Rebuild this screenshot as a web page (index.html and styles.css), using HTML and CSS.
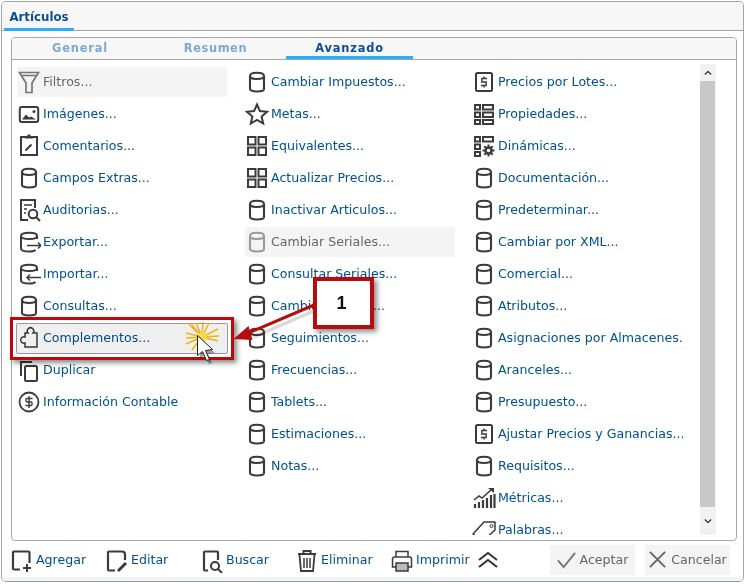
FILE: index.html
```html
<!DOCTYPE html>
<html lang="es">
<head>
<meta charset="utf-8">
<title>Artículos</title>
<link rel="stylesheet" href="styles.css">
</head>
<body>
<svg class="defs" width="0" height="0">
  <defs>
    <symbol id="cyl" viewBox="0 0 24 24"><path d="M5 6C5 3.800 8 2.800 12 2.800S19 3.800 19 6v13c0 1.600-3 2.500-7 2.500S5 20.600 5 19zM5 6c0 2 3 3 7 3s7-1 7-3" fill="none" stroke="currentColor" stroke-width="2.100"/></symbol>
    <symbol id="grid" viewBox="0 0 24 24"><path d="M3 3h7.500v7.500H3zM13.500 3H21v7.500h-7.500zM3 13.500h7.500V21H3zM13.500 13.500H21V21h-7.500z" fill="none" stroke="currentColor" stroke-width="2"/></symbol>
    <symbol id="dollar" viewBox="0 0 24 24"><rect x="4" y="3" width="16" height="18" rx="1.500" fill="none" stroke="currentColor" stroke-width="2"/><path d="M15 8.500H9.800v3.500h4.400v3.500H9M12 6.500v2M12 15.500v2" fill="none" stroke="currentColor" stroke-width="1.400"/></symbol>
  </defs>
</svg>
<main class="window">
  <header class="head"><span class="head-tab">Artículos</span></header>
  <section class="panel">
    <nav class="tabs">
      <span class="tab tab-general">General</span>
      <span class="tab tab-resumen">Resumen</span>
      <span class="tab tab-active">Avanzado</span>
    </nav>
    <div class="body">
      <div class="list">
        <div class="col">
          <a class="item item-off"><span class="ic"><svg viewBox="0 0 24 24"><path d="M2.500 2.500h19L15 13v9.500H9V13zM4 5.500h16" fill="none" stroke="#777" stroke-width="1.700"/></svg></span>Filtros...</a>
          <a class="item"><span class="ic"><svg viewBox="0 0 24 24"><rect x="2.800" y="5" width="18.400" height="15" rx="2" fill="none" stroke="currentColor" stroke-width="2"/><path d="M5 17.500l4-5 3 3 2-1 5 3z" fill="currentColor"/><circle cx="17" cy="9.500" r="1.500" fill="currentColor"/></svg></span>Imágenes...</a>
          <a class="item"><span class="ic"><svg viewBox="0 0 24 24"><path d="M8 3H4v18h16V3h-4" fill="none" stroke="currentColor" stroke-width="2"/><path d="M8 4.500V2h2.500V.5h3V2H16v2.500z" fill="currentColor"/><path d="M8.500 16.500l6-6" stroke="currentColor" stroke-width="2"/></svg></span>Comentarios...</a>
          <a class="item"><span class="ic"><svg><use href="#cyl"/></svg></span>Campos Extras...</a>
          <a class="item"><span class="ic"><svg viewBox="0 0 24 24"><path d="M11 22H4V2h14v8" fill="none" stroke="currentColor" stroke-width="2"/><path d="M7 7h8M7 11h3M7 15h2" stroke="currentColor" stroke-width="1.500"/><circle cx="16" cy="16" r="4.300" fill="none" stroke="currentColor" stroke-width="2"/><path d="M19 19l4 4" stroke="currentColor" stroke-width="2"/></svg></span>Auditorias...</a>
          <a class="item"><span class="ic"><svg viewBox="0 0 24 24"><path d="M20 9V6C20 3.800 17 2.800 12.500 2.800S4 3.800 4 6V18.500c0 2 3.500 3 8.500 3 3 0 5-.5 6-1.500M4 6c0 2 3.500 3 8.500 3S20 8 20 6" fill="none" stroke="currentColor" stroke-width="2"/><path d="M10 15.500h14M21 12.500l3 3-3 3" fill="none" stroke="currentColor" stroke-width="1.500"/></svg></span>Exportar...</a>
          <a class="item"><span class="ic"><svg viewBox="0 0 24 24"><path d="M20 9V6C20 3.800 17 2.800 12.500 2.800S4 3.800 4 6V18.500c0 2 3.500 3 8.500 3 3 0 5-.5 6-1.500M4 6c0 2 3.500 3 8.500 3S20 8 20 6" fill="none" stroke="currentColor" stroke-width="2"/><path d="M10 15.500h14M13 12.500l-3 3 3 3" fill="none" stroke="currentColor" stroke-width="1.500"/></svg></span>Importar...</a>
          <a class="item"><span class="ic"><svg><use href="#cyl"/></svg></span>Consultas...</a>
          <a class="item item-hover"><span class="ic"><svg viewBox="0 0 24 24"><path d="M8 7h3a3.200 3.200 0 1 1 5 0h4v14H8v-4a3.200 3.200 0 1 1 0-6z" fill="none" stroke="currentColor" stroke-width="1.500"/></svg></span>Complementos...</a>
          <a class="item"><span class="ic"><svg viewBox="0 0 24 24"><path d="M4 18V4h11" fill="none" stroke="currentColor" stroke-width="2"/><rect x="8" y="8" width="12" height="15" rx="1.500" fill="none" stroke="currentColor" stroke-width="2"/></svg></span>Duplicar</a>
          <a class="item"><span class="ic"><svg viewBox="0 0 24 24"><circle cx="12" cy="12" r="9.500" fill="none" stroke="currentColor" stroke-width="1.800"/><path d="M15.500 8.500H10c-1.500 0-1.500 3.500 0 3.500h4c1.500 0 1.500 3.500 0 3.500H8.500M12 6v12" fill="none" stroke="currentColor" stroke-width="1.400"/></svg></span>Información Contable</a>
        </div>
        <div class="col">
          <a class="item"><span class="ic"><svg><use href="#cyl"/></svg></span>Cambiar Impuestos...</a>
          <a class="item"><span class="ic"><svg viewBox="0 0 24 24"><path d="M12 2.500l2.900 6.600 7.100.7-5.400 4.700 1.600 7L12 17.800l-6.200 3.700 1.600-7L2 9.800l7.100-.7z" fill="none" stroke="currentColor" stroke-width="2"/></svg></span>Metas...</a>
          <a class="item"><span class="ic"><svg><use href="#grid"/></svg></span>Equivalentes...</a>
          <a class="item"><span class="ic"><svg><use href="#grid"/></svg></span>Actualizar Precios...</a>
          <a class="item"><span class="ic"><svg><use href="#cyl"/></svg></span>Inactivar Articulos...</a>
          <a class="item item-off"><span class="ic ic-off"><svg><use href="#cyl"/></svg></span>Cambiar Seriales...</a>
          <a class="item"><span class="ic"><svg><use href="#cyl"/></svg></span>Consultar Seriales...</a>
          <a class="item"><span class="ic"><svg><use href="#cyl"/></svg></span>Cambiar Precios...</a>
          <a class="item"><span class="ic"><svg><use href="#cyl"/></svg></span>Seguimientos...</a>
          <a class="item"><span class="ic"><svg><use href="#cyl"/></svg></span>Frecuencias...</a>
          <a class="item"><span class="ic"><svg><use href="#cyl"/></svg></span>Tablets...</a>
          <a class="item"><span class="ic"><svg><use href="#cyl"/></svg></span>Estimaciones...</a>
          <a class="item"><span class="ic"><svg><use href="#cyl"/></svg></span>Notas...</a>
        </div>
        <div class="col">
          <a class="item"><span class="ic"><svg><use href="#dollar"/></svg></span>Precios por Lotes...</a>
          <a class="item"><span class="ic"><svg viewBox="0 0 24 24"><path d="M3 3h5v4.500H3zM11 3h10v4.500H11zM3 10.500h5V15H3zM11 10.500h10V15H11zM3 18h5v4H3zM11 18h10v4H11z" fill="none" stroke="currentColor" stroke-width="2"/></svg></span>Propiedades...</a>
          <a class="item"><span class="ic"><svg viewBox="0 0 24 24"><path d="M3 3h5v4.500H3zM11 3h10v4.500H11zM3 10.500h5V15H3zM3 18h5v4H3z" fill="none" stroke="currentColor" stroke-width="2"/><circle cx="16.500" cy="16.500" r="3" fill="none" stroke="currentColor" stroke-width="2.500"/><path d="M16.500 10.500v3M16.500 19.500v3M10.500 16.500h3M19.500 16.500h3M12.300 12.300l2 2M18.700 18.700l2 2M12.300 20.700l2-2M18.700 14.300l2-2" stroke="currentColor" stroke-width="2"/></svg></span>Dinámicas...</a>
          <a class="item"><span class="ic"><svg><use href="#cyl"/></svg></span>Documentación...</a>
          <a class="item"><span class="ic"><svg><use href="#cyl"/></svg></span>Predeterminar...</a>
          <a class="item"><span class="ic"><svg><use href="#cyl"/></svg></span>Cambiar por XML...</a>
          <a class="item"><span class="ic"><svg><use href="#cyl"/></svg></span>Comercial...</a>
          <a class="item"><span class="ic"><svg><use href="#cyl"/></svg></span>Atributos...</a>
          <a class="item"><span class="ic"><svg><use href="#cyl"/></svg></span>Asignaciones por Almacenes...</a>
          <a class="item"><span class="ic"><svg><use href="#cyl"/></svg></span>Aranceles...</a>
          <a class="item"><span class="ic"><svg><use href="#cyl"/></svg></span>Presupuesto...</a>
          <a class="item"><span class="ic"><svg><use href="#dollar"/></svg></span>Ajustar Precios y Ganancias...</a>
          <a class="item"><span class="ic"><svg><use href="#cyl"/></svg></span>Requisitos...</a>
          <a class="item"><span class="ic"><svg viewBox="0 0 24 24"><path d="M3 22v-4M7 22v-6M11 22v-8M15 22v-10M19 22V9M22.500 22V8" stroke="currentColor" stroke-width="2.200"/><path d="M2 14l5-4 3 2 9-8" fill="none" stroke="currentColor" stroke-width="1.500"/><path d="M16 2h6v5z" fill="currentColor"/></svg></span>Métricas...</a>
          <a class="item"><span class="ic"><svg viewBox="-1 0 24 24"><path d="M0 16L11 4h11v8L10 23z" fill="none" stroke="currentColor" stroke-width="1.500" stroke-linejoin="round"/><circle cx="18.500" cy="8" r="1.500" fill="none" stroke="currentColor"/></svg></span>Palabras...</a>
        </div>
      </div>
      <div class="scrollbar">
        <span class="sb-btn sb-up"><svg viewBox="0 0 10 6"><path d="M1 5l4-4 4 4" fill="none" stroke="#444" stroke-width="1.800"/></svg></span>
        <span class="sb-thumb"></span>
        <span class="sb-btn sb-down"><svg viewBox="0 0 10 6"><path d="M1 1l4 4 4-4" fill="none" stroke="#444" stroke-width="1.800"/></svg></span>
      </div>
    </div>
  </section>
  <footer class="foot">
    <a class="tool"><svg class="tool-ic" viewBox="0 0 24 24"><path d="M10 20.500H4a1 1 0 0 1-1-1V3.500a1 1 0 0 1 1-1h14.500a1 1 0 0 1 1 1V14" fill="none" stroke="currentColor" stroke-width="2.200"/><path d="M17 15v8M13 19h8" stroke="currentColor" stroke-width="2"/></svg>Agregar</a>
    <a class="tool"><svg class="tool-ic" viewBox="0 0 24 24"><path d="M10 21.500H4a1 1 0 0 1-1-1V3.500a1 1 0 0 1 1-1h13a3 3 0 0 1 3 3V11" fill="none" stroke="currentColor" stroke-width="2.200"/><path d="M13 22l8-8" stroke="currentColor" stroke-width="3"/></svg>Editar</a>
    <a class="tool"><svg class="tool-ic" viewBox="0 0 24 24"><path d="M8 21.500H5a1 1 0 0 1-1-1V3.500a1 1 0 0 1 1-1h12a1 1 0 0 1 1 1V11" fill="none" stroke="currentColor" stroke-width="2.200"/><circle cx="15" cy="17" r="4" fill="none" stroke="currentColor" stroke-width="2"/><path d="M18 20l4 4" stroke="currentColor" stroke-width="2"/></svg>Buscar</a>
    <a class="tool"><svg class="tool-ic" viewBox="0 0 24 24"><path d="M4.500 6l1.500 16h12l1.500-16" fill="none" stroke="currentColor" stroke-width="1.800"/><path d="M3 5h18M8.500 4V2h7v2" fill="none" stroke="currentColor" stroke-width="2"/><path d="M9 9v10M12 9v10M15 9v10" stroke="currentColor" stroke-width="1.500"/></svg>Eliminar</a>
    <a class="tool tool-last"><svg class="tool-ic" viewBox="0 0 24 24"><path d="M6 7.500V2.500h12v5M6 18H2.500V10a2 2 0 0 1 2-2h15a2 2 0 0 1 2 2v8H18" fill="none" stroke="currentColor" stroke-width="1.500"/><path d="M6 14h12v8H6z" fill="#bbb" stroke="currentColor" stroke-width="1.500"/></svg>Imprimir</a>
    <svg class="chev" viewBox="0 0 20 16"><path d="M1 8l9-7 9 7M1 15l9-7 9 7" fill="none" stroke="#333" stroke-width="2"/></svg>
    <span class="spring"></span>
    <button class="btn"><svg class="btn-ic" viewBox="0 0 20 20"><path d="M1 11l6 7L19 3" fill="none" stroke="#777" stroke-width="2"/></svg>Aceptar</button>
    <button class="btn"><svg class="btn-ic" viewBox="0 0 20 20"><path d="M2 2l16 16M18 2L2 18" fill="none" stroke="#666" stroke-width="2"/></svg>Cancelar</button>
  </footer>
</main>

<div class="mark"></div>
<svg class="overlay" width="746" height="584" viewBox="0 0 746 584">
  <path class="arrow-shadow" d="M316 310L254 337"/>
  <path class="arrow-line" d="M314 305L246 334"/>
  <path class="arrow-head" d="M233.500 339l15-13 4 14z"/>
  <path class="star-rays" d="M202 337L188 323M202 337L192 325M202 337L196 323M202 337L203 322M202 337L209 323M202 337L218 329M202 337L219 336M202 337L218 341M202 337L186 344M202 337L186 333M202 337L186 338M202 337L192 350M202 337L207 350"/>
  <circle class="star-core" cx="202" cy="337" r="5"/>
  <path class="cursor-shadow" d="M200 339v20l5-4 4 9 3-1-4-9 7-1z"/>
  <path class="cursor" d="M197.500 335.500v20l5-4 4 9 3-1-4-9 7-1z"/>
</svg>
<div class="callout">1</div>
</body>
</html>
```
FILE: styles.css
```css
* { box-sizing: border-box; }
html, body { margin: 0; padding: 0; background: #fff; }
body { width: 746px; height: 584px; position: relative; overflow: hidden; font-family: "DejaVu Sans", sans-serif; font-size: 12.6px; color: #00508f; }
.defs { position: absolute; }
.window { margin: 1px 0 0 1px; width: 743px; height: 581px; border: 1px solid #a6a6a6; border-radius: 5px; background: #fff; border-bottom-color: #999; display: flex; flex-direction: column; overflow: hidden; }
.head { height: 29px; background: #f7f7f7; border-bottom: 1px solid #a6a6a6; padding-left: 2px; display: flex; flex: none; }
.head-tab { width: 70px; height: 29px; text-align: center; font-weight: 700; font-size: 11.8px; line-height: 31px; color: #0a4f96; border-bottom: 3px solid #27b0f8; border-radius: 0 0 2px 2px; }
.panel { margin: 6px 6px 0 9px; height: 504px; width: 726px; border: 1px solid #a6a6a6; border-radius: 4px; display: flex; flex-direction: column; flex: none; overflow: hidden; }
.tabs { height: 22px; flex: none; background: #f7f7f7; border-bottom: 1px solid #a6a6a6; display: flex; font-weight: 700; font-size: 11.4px; letter-spacing: .85px; line-height: 20px; }
.tab { text-align: center; height: 21px; }
.tab-general { width: 136px; color: #7ea9d1; }
.tab-resumen { width: 135px; margin-right: 3px; color: #7ea9d1; letter-spacing: .6px; }
.tab-active { width: 127px; color: #0a4f96; border-bottom: 3px solid #27b0f8; }
.body { flex: 1; display: flex; min-height: 0; padding: 4px 0 0 0; position: relative; }
.list { width: 688px; flex: none; height: 471px; padding: 3px 0 0 5px; display: grid; grid-template-columns: 228px 227px 220px; overflow: hidden; }
.col { display: flex; flex-direction: column; gap: 2px; }
.item { width: 210px; height: 30px; flex: none; display: flex; align-items: center; gap: 2px; white-space: nowrap; border-radius: 2px; padding-bottom: 1px; overflow: hidden; }
.col:last-child .item { width: 211px; }
.ic { width: 24px; height: 24px; flex: none; color: #3b3b3b; display: block; }
.ic svg { width: 24px; height: 24px; display: block; }
.ic-off { color: #999; }
.item-off { background: #f4f4f4; color: #666; }
.item-hover { background: transparent; }
.scrollbar { width: 16px; height: 471px; flex: none; display: flex; flex-direction: column; background: #f1f1f1; }
.sb-btn { height: 17px; flex: none; display: flex; align-items: center; justify-content: center; }
.sb-btn svg { width: 8px; height: 6px; }
.sb-thumb { height: 426px; width: 15px; background: #c8c8c8; flex: none; }
.sb-down { height: 28px; }
.foot { flex: 1; display: flex; align-items: center; padding: 0 13px 3px 8px; background: linear-gradient(#fff 36px, #f0f4f8 36px); }
.tool { width: 95px; display: flex; align-items: center; gap: 2px; flex: none; white-space: nowrap; }
.tool-last { width: 88px; }
.tool-ic { width: 24px; height: 24px; flex: none; color: #3b3b3b; margin-bottom: -2px; }
.chev { width: 20px; height: 16px; flex: none; }
.spring { flex: 1; }
.btn { width: 85px; height: 30px; margin-left: 10px; border: 0; border-radius: 2px; background: #f4f4f4; color: #666; font: inherit; display: flex; align-items: center; justify-content: center; gap: 4px; padding: 0; }
.btn-ic { width: 19px; height: 19px; flex: none; }
.mark { position: absolute; left: 10px; top: 317px; width: 224px; height: 43px; border: 3px solid #b80c0c; box-shadow: 3px 3px 5px rgba(0,0,0,.45); }
.mark::before { content: ""; position: absolute; left: 3px; top: 3px; right: 3px; bottom: 3px; border: 1px solid #999; border-radius: 2px; background: rgba(226,226,226,.55); mix-blend-mode: multiply; }
.overlay { position: absolute; left: 0; top: 0; pointer-events: none; }
.arrow-shadow { fill: none; stroke: rgba(0,0,0,.15); stroke-width: 3; }
.arrow-line { stroke: #b80c0c; stroke-width: 3; fill: none; }
.arrow-head { fill: #b80c0c; }
.star-rays { stroke: #eeb414; stroke-width: 1.5; fill: none; }
.star-core { fill: #f7d84e; }
.cursor-shadow { fill: rgba(0,0,0,.35); }
.cursor { fill: #fff; stroke: #222; stroke-width: 1; }
.callout { position: absolute; left: 313px; top: 277px; width: 61px; height: 52px; border: 4px solid #b80c0c; padding-right: 4px; background: #fff; box-shadow: 3px 3px 5px rgba(0,0,0,.45); font: 700 18px/44px "Liberation Sans", sans-serif; color: #111; text-align: center; }
```
